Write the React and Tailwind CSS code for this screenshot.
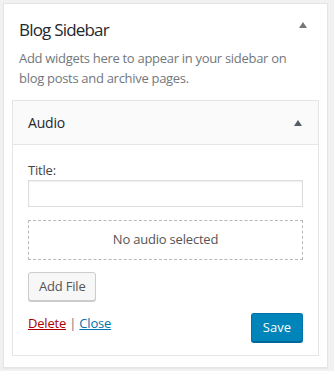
export default function App() {
  const font = { fontFamily: '"Open Sans", "Noto Sans", sans-serif' };

  return (
    <div className="min-h-[371px] bg-[#f1f1f1] pt-[3px] pl-[3px]" style={font}>
      <div className="w-[325px] h-[365px] bg-white border border-[#e5e5e5] shadow-[0_1px_1px_rgba(0,0,0,0.04)]">
        {/* Sidebar header */}
        <div className="flex items-start justify-between pl-[15px] pr-[20px] pt-[14px]">
          <h2 className="text-[17px] leading-[24px] tracking-[-0.8px] text-[#23282d] font-normal">Blog Sidebar</h2>
          <svg width="8" height="6" viewBox="0 0 8 6" className="mt-[4px]">
            <polygon points="4,0 8,6 0,6" fill="#72777c" />
          </svg>
        </div>
        <p className="px-[15px] mt-[6px] text-[13px] leading-[20px] tracking-[-0.3px] text-[#72777c]">
          Add widgets here to appear in your sidebar on blog posts and archive pages.
        </p>

        {/* Audio widget */}
        <div className="mx-[8px] mt-[12px] border border-[#e5e5e5]">
          <div className="h-[44px] flex items-center justify-between bg-[#fafafa] border-b border-[#e5e5e5] pl-[15px] pr-[16px]">
            <h3 className="text-[14px] font-medium tracking-[-0.2px] text-[#23282d]">Audio</h3>
            <svg width="8" height="6" viewBox="0 0 8 6">
              <polygon points="4,0 8,6 0,6" fill="#555d66" />
            </svg>
          </div>

          <div className="px-[15px] pt-[16px] pb-[13px]">
            <label className="block text-[13px] leading-[19px] tracking-[-0.2px] text-[#444]">Title:</label>
            <input
              type="text"
              className="block w-full h-[27px] border border-[#ddd] shadow-[inset_0_1px_2px_rgba(0,0,0,0.07)] outline-none"
            />
            <div className="mt-[13px] h-[40px] flex items-center justify-center border border-dashed border-[#b4b9be] text-[13px] tracking-[-0.2px] text-[#555]">
              No audio selected
            </div>
            <button className="mt-[12px] h-[29px] px-[10px] bg-[#f7f7f7] border border-[#ccc] rounded-[3px] shadow-[0_1px_0_#ccc] text-[13px] tracking-[-0.2px] text-[#555]">
              Add File
            </button>
            <div className="mt-[12px] flex items-start justify-between">
              <div className="text-[13px] leading-[20px] tracking-[-0.2px]">
                <a className="text-[#a00] underline">Delete</a>
                <span className="text-[#72777c]"> | </span>
                <a className="text-[#0073aa] underline">Close</a>
              </div>
              <button className="h-[29px] px-[11px] bg-[#0085ba] border border-[#0073aa] border-b-[#006799] rounded-[3px] shadow-[0_1px_0_#006799] text-[13px] text-white">
                Save
              </button>
            </div>
          </div>
        </div>
      </div>
    </div>
  );
}
